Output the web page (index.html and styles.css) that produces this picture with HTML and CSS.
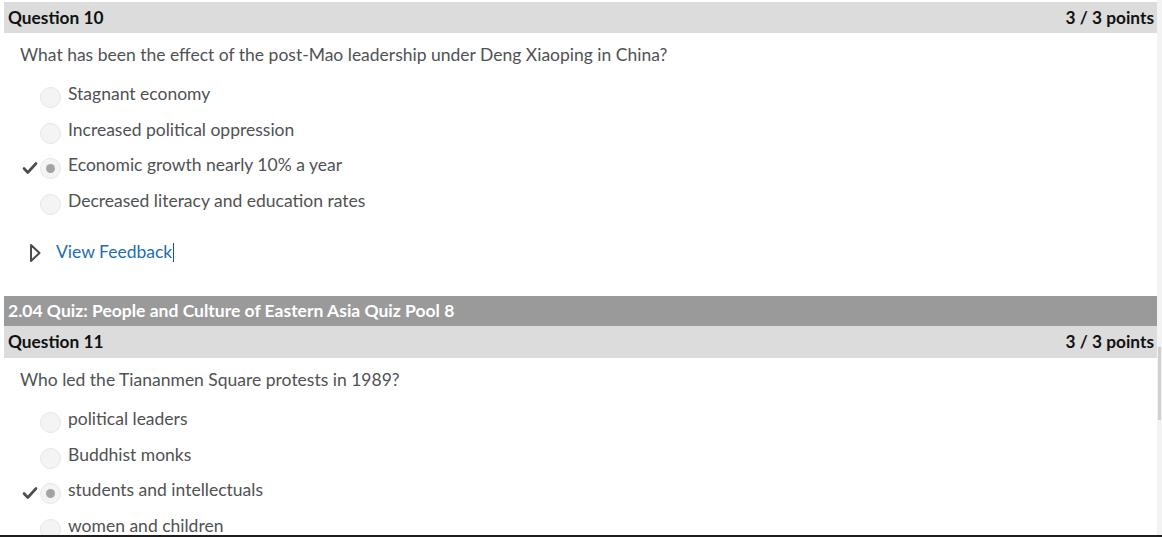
FILE: index.html
```html
<!DOCTYPE html>
<html>
<head>
<meta charset="utf-8">
<link rel="stylesheet" href="styles.css">
</head>
<body>
<div class="page">
  <main class="main">
    <section class="question">
      <div class="qhead"><span>Question 10</span><span>3 / 3 points</span></div>
      <p class="qtext">What has been the effect of the post-Mao leadership under Deng Xiaoping in China?</p>
      <ul class="options">
        <li class="opt"><span class="mark"></span><span class="radio"></span><span class="label">Stagnant economy</span></li>
        <li class="opt"><span class="mark"></span><span class="radio"></span><span class="label">Increased political oppression</span></li>
        <li class="opt"><span class="mark"><svg width="16" height="14" viewBox="0 0 16 14"><path d="M2 7.5 L5.8 11.5 L14 2.5" fill="none" stroke="#4a4c4e" stroke-width="2.6" stroke-linecap="round" stroke-linejoin="round"/></svg></span><span class="radio checked"></span><span class="label">Economic growth nearly 10% a year</span></li>
        <li class="opt"><span class="mark"></span><span class="radio"></span><span class="label">Decreased literacy and education rates</span></li>
      </ul>
      <div class="feedback"><svg class="tri" width="12" height="20" viewBox="0 0 12 20"><path d="M2 2 L10.5 10 L2 18 Z" fill="none" stroke="#4a4c4e" stroke-width="2" stroke-linejoin="round"/></svg><span class="link">View Feedback</span><span class="caret"></span></div>
    </section>
    <div class="section-title">2.04 Quiz: People and Culture of Eastern Asia Quiz Pool 8</div>
    <section class="question">
      <div class="qhead tall"><span>Question 11</span><span>3 / 3 points</span></div>
      <p class="qtext">Who led the Tiananmen Square protests in 1989?</p>
      <ul class="options">
        <li class="opt"><span class="mark"></span><span class="radio"></span><span class="label">political leaders</span></li>
        <li class="opt"><span class="mark"></span><span class="radio"></span><span class="label">Buddhist monks</span></li>
        <li class="opt"><span class="mark"><svg width="16" height="14" viewBox="0 0 16 14"><path d="M2 7.5 L5.8 11.5 L14 2.5" fill="none" stroke="#4a4c4e" stroke-width="2.6" stroke-linecap="round" stroke-linejoin="round"/></svg></span><span class="radio checked"></span><span class="label">students and intellectuals</span></li>
        <li class="opt"><span class="mark"></span><span class="radio"></span><span class="label">women and children</span></li>
      </ul>
    </section>
  </main>
  <aside class="scrollbar"><div class="thumb"></div></aside>
</div>
<div class="bottom-edge"></div>
</body>
</html>
```

FILE: styles.css
```css
html, body {
  margin: 0;
  padding: 0;
  height: 537px;
  overflow: hidden;
  background: #ffffff;
  font-family: Lato, "Liberation Sans", sans-serif;
  color: #4f5254;
}
.page {
  display: flex;
  min-height: 537px;
}
.main {
  flex: 1;
  padding: 2px 0 0 4px;
}
.scrollbar {
  width: 5px;
  background: #f3f3f3;
  padding-top: 347px;
}
.thumb {
  margin-left: 1px;
  width: 3px;
  height: 73px;
  background: #cfcfcf;
}
.qhead {
  display: flex;
  justify-content: space-between;
  height: 31px;
  line-height: 31px;
  background: #dcdcdc;
  color: #111;
  font-weight: 700;
  font-size: 17.3px;
  padding: 0 3px 0 4px;
}
.qhead.tall {
  height: 32px;
  line-height: 32px;
}
.qtext {
  margin: 10px 0 0 16px;
  font-size: 17.5px;
  line-height: 24px;
}
.options {
  list-style: none;
  margin: 15px 0 0 0;
  padding: 0;
  display: flex;
  flex-direction: column;
  gap: 11.7px;
}
.opt {
  display: flex;
  align-items: center;
  height: 24px;
  font-size: 17.5px;
  line-height: 24px;
}
.mark {
  width: 17px;
  margin-left: 18px;
  height: 14px;
  display: flex;
  align-items: center;
  justify-content: flex-start;
  padding-top: 6px;
}
.radio {
  box-sizing: border-box;
  width: 21px;
  height: 21px;
  border-radius: 50%;
  background: #f4f4f4;
  border: 1px solid #e6e6e6;
  margin-left: 1px;
  margin-top: 7px;
  display: flex;
  align-items: center;
  justify-content: center;
}
.radio.checked::after {
  content: "";
  width: 9px;
  height: 9px;
  border-radius: 50%;
  background: #a3a3a3;
}
.label {
  margin-left: 7px;
}
.feedback {
  display: flex;
  align-items: center;
  margin: 27px 0 0 25px;
  height: 24px;
  font-size: 17.5px;
  line-height: 24px;
}
.tri {
  margin-top: 1px;
}
.link {
  margin-left: 15px;
  color: #1c6fb1;
}
.caret {
  width: 1px;
  height: 19px;
  background: #1c4f80;
  margin-left: 1px;
}
.section-title {
  margin-top: 32px;
  height: 30px;
  line-height: 30px;
  background: #9a9a9a;
  color: #ffffff;
  font-weight: 700;
  font-size: 17.5px;
  padding-left: 4px;
}
.bottom-edge {
  position: fixed;
  left: 0;
  right: 0;
  bottom: 0;
  height: 2px;
  background: #1e1e1e;
}
```
